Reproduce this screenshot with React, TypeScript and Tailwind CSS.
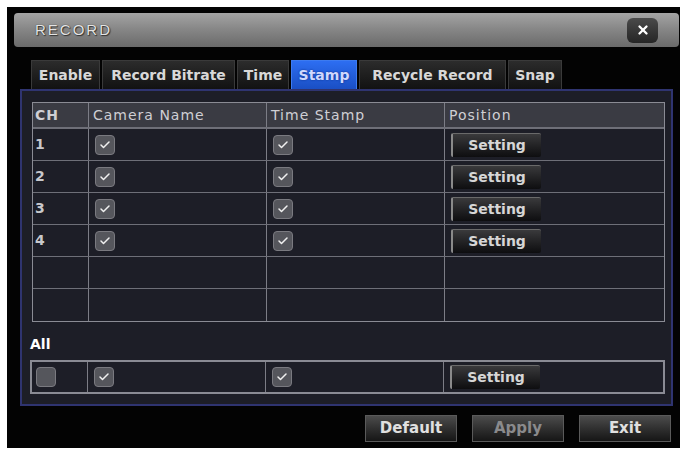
import { Check, X } from "lucide-react";

const tabs = [
  { label: "Enable", w: "w-[69px]" },
  { label: "Record Bitrate", w: "w-[133px]" },
  { label: "Time", w: "w-[52px]" },
  { label: "Stamp", w: "w-[66px]", active: true },
  { label: "Recycle Record", w: "w-[147px]" },
  { label: "Snap", w: "w-[54px]" },
];

const rows = ["1", "2", "3", "4", "", ""];

function CheckBox({ checked = true }: { checked?: boolean }) {
  return (
    <div className="flex h-[20px] w-[20px] items-center justify-center rounded-[4px] border border-[#7a7a80] bg-[#55565c]">
      {checked && <Check className="h-[12px] w-[12px] text-[#f0f0f0]" strokeWidth={3} />}
    </div>
  );
}

function SettingButton() {
  return (
    <button className="ml-[6px] flex h-[24px] w-[90px] items-center justify-center rounded-[2px] border-l-2 border-t border-l-[#8a8a8a] border-t-[#6a6a6a] bg-gradient-to-b from-[#3a3a3c] to-[#0e0e10] text-[14px] font-bold text-[#d6d6d6]">
      Setting
    </button>
  );
}

function Cell({ children, w, last }: { children?: React.ReactNode; w: string; last?: boolean }) {
  return (
    <div className={`flex h-full items-center ${w} ${last ? "" : "border-r border-[#7c7d86]"}`}>
      {children}
    </div>
  );
}

export default function App() {
  return (
    <div
      className="h-[451px] w-[687px] bg-white pl-[7px] pt-[7px]"
      style={{ fontFamily: '"DejaVu Sans", "Liberation Sans", sans-serif' }}
    >
      <div className="flex h-[441px] w-[673px] flex-col bg-[#030303]">
        {/* Title bar */}
        <div className="ml-[7px] mr-[1px] mt-[6px] flex h-[34px] items-center justify-between rounded-[4px] bg-gradient-to-b from-[#a4a4a4] via-[#858585] to-[#6b6b6b] pl-[21px] pr-[21px]">
          <span
            className="text-[15px] tracking-[2px] text-[#e4e4e4] [text-shadow:0_0_1px_#222,1px_1px_1px_#333]"
            style={{ fontFamily: '"Liberation Sans", sans-serif' }}
          >
            RECORD
          </span>
          <div className="flex h-[25px] w-[31px] items-center justify-center rounded-[6px] bg-gradient-to-b from-[#4a4a4a] to-[#262626]">
            <X className="h-[14px] w-[14px] text-white" strokeWidth={4} />
          </div>
        </div>

        {/* Tabs */}
        <div className="ml-[24px] mt-[13px] flex h-[29px] gap-[2px]">
          {tabs.map((t) => (
            <div
              key={t.label}
              className={`flex h-full ${t.w} items-center justify-center border-t border-l border-r text-[14px] font-bold ${
                t.active
                  ? "border-[#3d7bf0] bg-gradient-to-b from-[#2d6ef2] to-[#1a4fc4] text-[#cfd8ff] [text-shadow:0_0_2px_#0a2a80]"
                  : "border-[#3a3a3a] bg-gradient-to-b from-[#2c2c2c] to-[#121212] text-[#d8d8d8]"
              }`}
            >
              {t.label}
            </div>
          ))}
        </div>

        {/* Panel */}
        <div className="ml-[13px] flex h-[317px] w-[653px] flex-col border-2 border-[#2f3470] bg-[#1d1e27] pl-[10px] pr-[6px] pt-[11px]">
          <div className="border border-[#8a8b94]">
            <div className="flex h-[26px] border-b-2 border-[#6e6f78] bg-[#3a3b43] text-[14px] tracking-[1px] text-[#cfcfd4]">
              <Cell w="w-[56px]">
                <span className="pl-[2px] font-bold">CH</span>
              </Cell>
              <Cell w="w-[178px]">
                <span className="pl-[4px]">Camera Name</span>
              </Cell>
              <Cell w="w-[178px]">
                <span className="pl-[4px]">Time Stamp</span>
              </Cell>
              <Cell w="flex-1" last>
                <span className="pl-[4px]">Position</span>
              </Cell>
            </div>
            {rows.map((r, i) => (
              <div
                key={i}
                className={`flex h-[32px] ${i < rows.length - 1 ? "border-b border-[#6e6f78]" : ""} text-[14px] font-bold text-[#c8c8cc]`}
              >
                <Cell w="w-[56px]">
                  <span className="pl-[2px]">{r}</span>
                </Cell>
                <Cell w="w-[178px]">
                  {r && (
                    <div className="pl-[6px]">
                      <CheckBox />
                    </div>
                  )}
                </Cell>
                <Cell w="w-[178px]">
                  {r && (
                    <div className="pl-[6px]">
                      <CheckBox />
                    </div>
                  )}
                </Cell>
                <Cell w="flex-1" last>
                  {r && <SettingButton />}
                </Cell>
              </div>
            ))}
          </div>

          <div className="-ml-[2px] mt-[12px] h-[22px] text-[14px] font-bold text-white">All</div>

          <div className="-ml-[2px] mt-[4px] flex h-[34px] border-2 border-[#8a8b94]">
            <Cell w="w-[56px]">
              <div className="pl-[4px]">
                <CheckBox checked={false} />
              </div>
            </Cell>
            <Cell w="w-[178px]">
              <div className="pl-[6px]">
                <CheckBox />
              </div>
            </Cell>
            <Cell w="w-[178px]">
              <div className="pl-[6px]">
                <CheckBox />
              </div>
            </Cell>
            <Cell w="flex-1" last>
              <SettingButton />
            </Cell>
          </div>
        </div>

        {/* Bottom buttons */}
        <div className="mr-[9px] mt-[9px] flex justify-end gap-[15px]">
          {[
            { label: "Default", color: "text-[#e0e0e0]" },
            { label: "Apply", color: "text-[#8a8a8c]" },
            { label: "Exit", color: "text-[#e0e0e0]" },
          ].map((b) => (
            <button
              key={b.label}
              className={`flex h-[27px] w-[92px] items-center justify-center border border-[#5a5a5a] bg-gradient-to-b from-[#4c4c4c] to-[#161616] text-[15px] font-bold ${b.color}`}
            >
              {b.label}
            </button>
          ))}
        </div>
      </div>
    </div>
  );
}
